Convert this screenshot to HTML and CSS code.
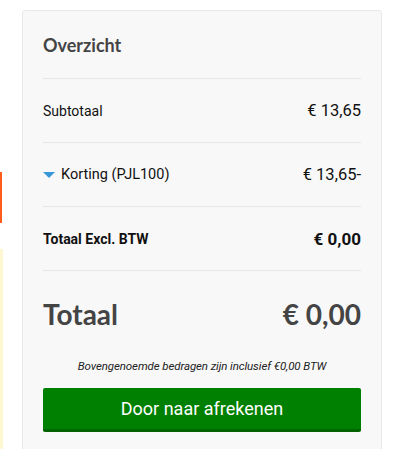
FILE: index.html
```html
<!DOCTYPE html>
<html lang="nl">
<head>
  <meta charset="UTF-8" />
  <meta name="viewport" content="width=device-width, initial-scale=1.0" />
  <title>Overzicht</title>
  <link rel="stylesheet" href="styles.css">
</head>
<body>
  <div class="page">
    <!-- strip of the column on the left, mostly cut off -->
    <div class="side">
      <div class="side-tab"></div>
      <div class="side-note"></div>
    </div>

    <div class="summary">
      <h2 class="summary-title">Overzicht</h2>

      <div class="row">
        <span class="label">Subtotaal</span>
        <span class="amount">€ 13,65</span>
      </div>

      <div class="row">
        <span class="label discount"><span class="caret"></span>Korting (PJL100)</span>
        <span class="amount">€ 13,65-</span>
      </div>

      <div class="row strong">
        <span class="label">Totaal Excl. BTW</span>
        <span class="amount">€ 0,00</span>
      </div>

      <div class="total">
        <span>Totaal</span>
        <span>€ 0,00</span>
      </div>

      <p class="vat-note">Bovengenoemde bedragen zijn inclusief €0,00 BTW</p>

      <button class="checkout" type="button">Door naar afrekenen</button>
    </div>
  </div>
</body>
</html>
```

FILE: styles.css
```css
body {
  margin: 0;
  padding: 0;
  background: #fff;
  font-family: Roboto, "Liberation Sans", Arial, sans-serif;
  color: #111;
}
.page {
  display: flex;
  align-items: flex-start;
  padding-top: 10px;
}
.side {
  width: 3px;
  flex-shrink: 0;
  padding-top: 162px;
}
.side-tab {
  width: 2px;
  height: 51px;
  background: #ff5b1a;
}
.side-note {
  margin-top: 26px;
  width: 3px;
  height: 300px;
  background: #fff7d1;
}
.summary {
  margin-left: 19px;
  width: 318px;
  padding: 0 20px 20px;
  background: #f8f8f8;
  border: 1px solid #e9e9e9;
  border-radius: 3px;
  height: 460px;
}
.summary-title {
  margin: 0;
  padding: 22px 0 21px;
  font-family: Lato, "Open Sans", sans-serif;
  font-size: 18px;
  line-height: 24px;
  font-weight: 700;
  color: #444;
}
.row {
  display: flex;
  justify-content: space-between;
  align-items: center;
  height: 63px;
  border-top: 1px solid #e7e7e7;
}
.label {
  font-size: 14px;
}
.amount {
  font-size: 16.5px;
}
.discount {
  display: flex;
  align-items: center;
  font-size: 14.5px;
}
.caret {
  width: 0;
  height: 0;
  border-left: 6px solid transparent;
  border-right: 6px solid transparent;
  border-top: 6px solid #3a98d6;
  margin-right: 6px;
}
.strong .label {
  font-weight: 700;
  font-size: 14px;
}
.strong .amount {
  font-weight: 700;
  font-size: 17px;
}
.total {
  display: flex;
  justify-content: space-between;
  align-items: center;
  border-top: 1px solid #e7e7e7;
  padding-top: 26px;
  font-family: Lato, "Open Sans", sans-serif;
  font-size: 28px;
  line-height: 34px;
  font-weight: 700;
  color: #444;
}
.vat-note {
  margin: 28px 0 0;
  text-align: center;
  font-size: 11.5px;
  line-height: 14px;
  font-style: italic;
  color: #222;
  letter-spacing: -0.1px;
}
.checkout {
  display: block;
  width: 100%;
  margin-top: 15px;
  height: 44px;
  border: none;
  border-bottom: 3px solid #006300;
  border-radius: 2px;
  background: #008000;
  color: #fff;
  font-family: Roboto, sans-serif;
  font-size: 18px;
  cursor: pointer;
}
```
